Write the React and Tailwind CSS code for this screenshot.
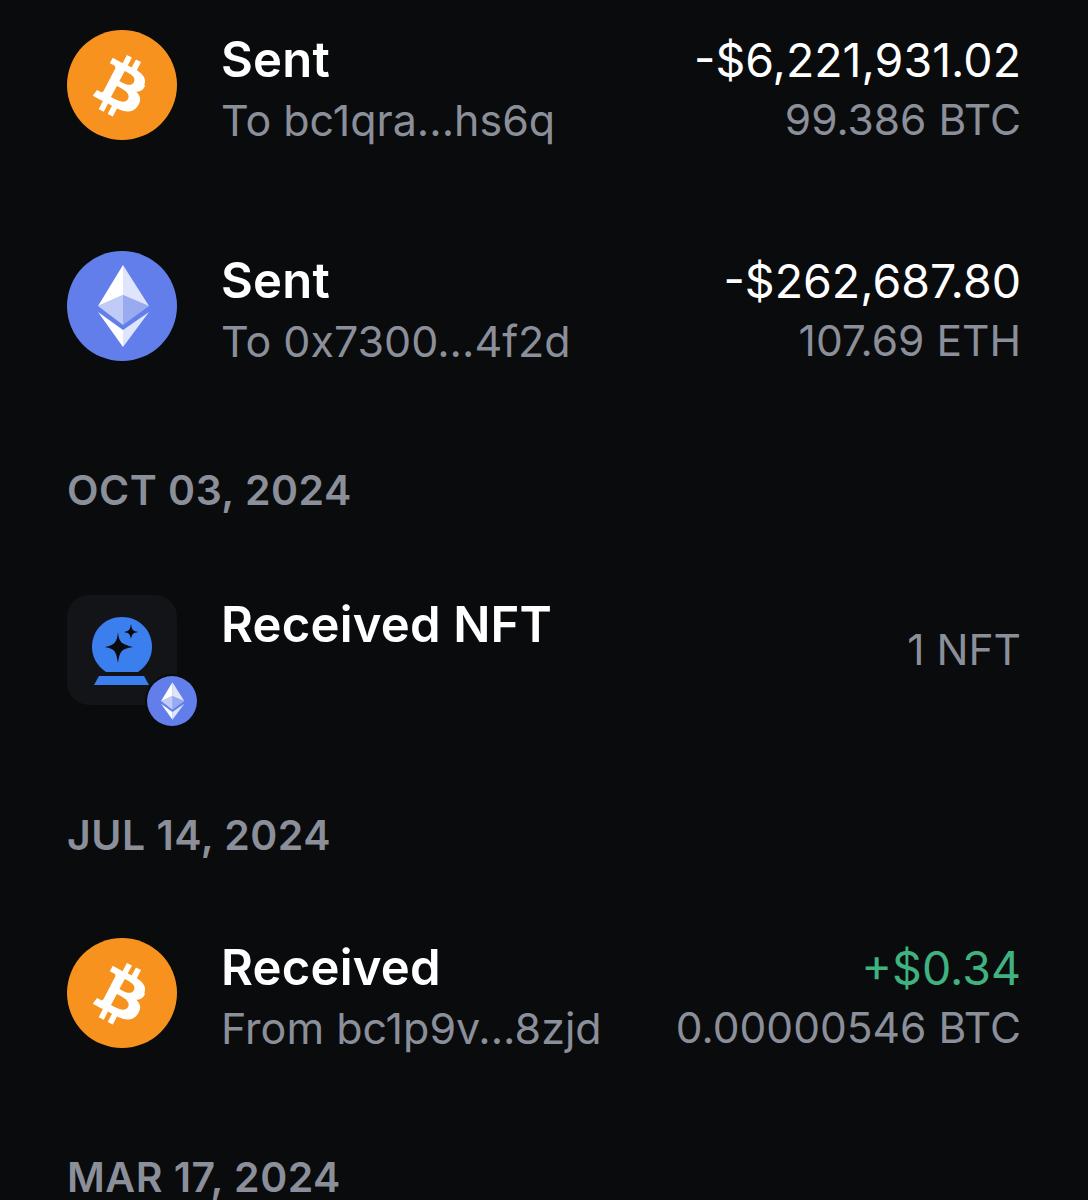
import React from "react";

const Btc = ({ size = 110 }) => (
  <svg width={size} height={size} viewBox="0 0 110 110" className="shrink-0">
    <circle cx="55" cy="55" r="55" fill="#f6921d" />
    <path transform="translate(55 56) rotate(14) scale(3.1) translate(-15.6 -16)" fill="#fff" d="M22.5 13.9c.3-2.1-1.3-3.3-3.5-4l.7-2.9-1.8-.4-.7 2.8c-.5-.1-1-.2-1.4-.3l.7-2.8-1.8-.4-.7 2.9c-.4-.1-.8-.2-1.1-.3l-2.4-.6-.5 1.9s1.3.3 1.3.3c.7.2.9.7.8 1l-.8 3.3c.1 0 .1 0 .2.1h-.2l-1.1 4.6c-.1.2-.3.5-.8.4 0 0-1.3-.3-1.3-.3l-.9 2.1 2.3.6c.4.1.8.2 1.3.3l-.7 2.9 1.8.4.7-2.9c.5.1 1 .3 1.4.4l-.7 2.9 1.8.4.7-2.9c3 .6 5.3.3 6.3-2.4.8-2.2 0-3.4-1.6-4.3 1.2-.3 2-1 2.3-2.5zm-4 5.7c-.6 2.2-4.3 1-5.5.7l1-3.9c1.2.3 5.1.9 4.5 3.2zm.5-5.7c-.5 2-3.6 1-4.6.7l.9-3.5c1 .3 4.3.7 3.7 2.8z" />
  </svg>
);

const Eth = ({ size = 110 }) => (
  <svg width={size} height={size} viewBox="0 0 110 110" className="shrink-0">
    <circle cx="55" cy="55" r="55" fill="#627eea" />
    <path fill="#fff" d="M56 14 L31 55 L56 44 Z" />
    <path fill="#fff" fillOpacity="0.8" d="M56 14 L82 55 L56 44 Z" />
    <path fill="#fff" fillOpacity="0.6" d="M31 55 L56 44 L56 74 Z" />
    <path fill="#fff" fillOpacity="0.35" d="M82 55 L56 44 L56 74 Z" />
    <path fill="#fff" d="M31 61 L56 79 L56 96 Z" />
    <path fill="#fff" fillOpacity="0.8" d="M82 61 L56 79 L56 96 Z" />
  </svg>
);

const NftIcon = () => (
  <div className="relative w-[110px] h-[110px] shrink-0 rounded-[22px] bg-[#131417] flex items-center justify-center">
    <svg width="62" height="72" viewBox="0 0 62 72">
      <path fill="#3b7fee" d="M15 58 C6 52 1 43 1 33 C1 16 14 3 31 3 C48 3 61 16 61 33 C61 43 56 52 47 58 Z" />
      <path fill="#3b7fee" d="M8 62 H53 L58 71 H3 Z" />
      <path fill="#0a0b0d" d="M27 20 C28 30 30 32 42 35 C30 37 29 39 27 51 C25 39 24 37 14 35 C24 33 26 30 27 20 Z" transform="translate(0 -2)" />
      <path fill="#0a0b0d" d="M40 10 C41 16 42 17 47 18 C42 19 41 20 40 25 C39 20 38 19 33 18 C38 17 39 16 40 10 Z" />
    </svg>
    <div className="absolute left-[78px] top-[79px] rounded-full bg-[#0a0b0d] p-[2px] flex">
      <Eth size={50} />
    </div>
  </div>
);

const Row = ({ icon, title, sub, amount, amountClass = "text-white", right, className = "" }) => (
  <div className={`flex justify-between h-[110px] ${className}`}>
    <div className="flex gap-[44px]">
      {icon}
      <div className="flex flex-col">
        <div className="text-[49px] leading-[60px] font-semibold text-white tracking-[0.2px] whitespace-nowrap">{title}</div>
        {sub && <div className="text-[43px] leading-[60px] text-[#8a8f9a] whitespace-nowrap">{sub}</div>}
      </div>
    </div>
    <div className={`flex flex-col items-end ${amount ? "justify-start" : "justify-center"}`}>
      {amount && <div className={`text-[46.5px] leading-[60px] whitespace-nowrap ${amountClass}`}>{amount}</div>}
      <div className="text-[42.5px] leading-[60px] text-[#8a8f9a] whitespace-nowrap">{right}</div>
    </div>
  </div>
);

const DateLabel = ({ children, className = "" }) => (
  <div className={`text-[41px] leading-[46px] font-semibold tracking-[0.5px] text-[#8a8f9a] whitespace-nowrap ${className}`}>{children}</div>
);

export default function App() {
  return (
    <div className="h-[1200px] overflow-hidden bg-[#0a0b0d] pl-[67px] pr-[67px] pt-[30px] font-['Inter','Liberation_Sans',sans-serif]">
      <Row icon={<Btc />} title="Sent" sub="To bc1qra...hs6q" amount="-$6,221,931.02" right="99.386 BTC" />
      <Row className="mt-[111px]" icon={<Eth />} title="Sent" sub="To 0x7300...4f2d" amount="-$262,687.80" right="107.69 ETH" />
      <DateLabel className="mt-[106px]">OCT 03, 2024</DateLabel>
      <Row className="mt-[82px]" icon={<NftIcon />} title="Received NFT" right="1 NFT" />
      <DateLabel className="mt-[107px]">JUL 14, 2024</DateLabel>
      <Row className="mt-[80px]" icon={<Btc />} title="Received" sub="From bc1p9v...8zjd" amount="+$0.34" amountClass="text-[#3fb27f]" right="0.00000546 BTC" />
      <DateLabel className="mt-[106px]">MAR 17, 2024</DateLabel>
    </div>
  );
}
